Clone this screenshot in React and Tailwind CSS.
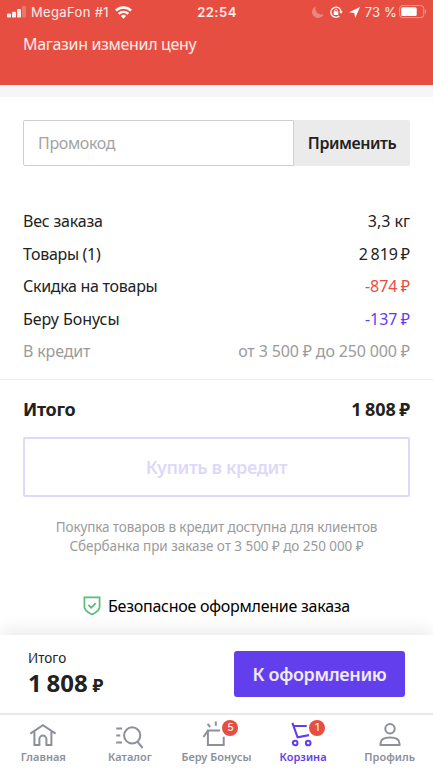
import React from 'react';

const summaryRows = [
  { label: 'Вес заказа', value: '3,3 кг', labelClass: 'tracking-[-0.2px]', valueClass: '' },
  { label: 'Товары (1)', value: '2 819 ₽', labelClass: 'tracking-[-0.3px]', valueClass: '[word-spacing:-1.5px]' },
  { label: 'Скидка на товары', value: '-874 ₽', labelClass: 'tracking-[-0.29px]', valueClass: '[word-spacing:-1px] text-[#e54e40]' },
  { label: 'Беру Бонусы', value: '-137 ₽', labelClass: 'tracking-[-0.05px]', valueClass: '[word-spacing:-1px] text-[#633eed]' },
  { label: 'В кредит', value: 'от 3 500 ₽ до 250 000 ₽', labelClass: 'tracking-[-0.15px] text-[#9b9b9b]', valueClass: 'tracking-[-0.15px] text-[#9b9b9b]' },
];

const HomeIcon = () => (
  <svg className="overflow-visible" width="28" height="25" viewBox="0 0 28 25" fill="none" stroke="currentColor" strokeWidth="2">
    <path d="M1.3 9.6 13.9 1.2l12.7 8.4" />
    <path d="M5.4 7.5v13.6h5v-6a3.5 3.5 0 0 1 7 0v6h5V7.5" />
  </svg>
);

const CatalogIcon = () => (
  <svg className="overflow-visible" width="28" height="25" viewBox="0 0 28 25" fill="none" stroke="currentColor" strokeWidth="2">
    <circle cx="16.2" cy="11.4" r="8.1" />
    <path d="m21.6 17.8 5 6.2M.2 4.4H6M.2 11.4h4M.2 18.4H6" />
  </svg>
);

const BonusIcon = () => (
  <svg className="overflow-visible" width="28" height="25" viewBox="0 0 28 25" fill="none" stroke="currentColor" strokeWidth="2">
    <path d="M1.5 13 5.9 6.4H18M5.9 6.4V21h15.8v-8.2" />
    <path d="m5.6-.2 2.6 3.2M13.8-2.6v4.4" />
  </svg>
);

const CartIcon = () => (
  <svg className="overflow-visible" width="28" height="25" viewBox="0 0 28 25" fill="none" stroke="currentColor" strokeWidth="2.1">
    <path d="M3.4-1.2 8.6 13.3 20 11.1M4.9 2h12.8" />
    <circle cx="6.2" cy="19" r="2.3" />
    <circle cx="19.2" cy="19" r="2.3" />
  </svg>
);

const ProfileIcon = () => (
  <svg className="overflow-visible" width="28" height="25" viewBox="0 0 28 25" fill="none" stroke="currentColor" strokeWidth="2">
    <circle cx="14" cy="4.7" r="4.7" />
    <path d="M4.5 21v-1.4c0-3.9 3.9-6 9.5-6s9.5 2.1 9.5 6V21z" />
  </svg>
);

const tabs = [
  { label: 'Главная', icon: HomeIcon },
  { label: 'Каталог', icon: CatalogIcon },
  { label: 'Беру Бонусы', icon: BonusIcon, badge: 5 },
  { label: 'Корзина', icon: CartIcon, badge: 1, active: true },
  { label: 'Профиль', icon: ProfileIcon },
];

const StatusBar = () => (
  <div className="grid grid-cols-[1fr_auto_1fr] items-center h-6 pl-[7px] pr-[6px] font-['Inter',sans-serif] text-[13px] leading-6 text-white/90">
    <div className="flex items-center">
      <svg width="19" height="12" viewBox="0 0 19 12" fill="currentColor">
        <rect x="0" y="7.5" width="4" height="4" rx="0.8" />
        <rect x="5" y="5.7" width="4" height="5.8" rx="0.8" />
        <rect x="10" y="3" width="4" height="8.5" rx="0.8" />
        <rect x="15" y="0" width="4" height="11.5" rx="0.8" opacity="0.25" />
      </svg>
      <span className="ml-[5px] tracking-[0.35px]">MegaFon #1</span>
      <svg className="ml-[6px]" width="17" height="13" viewBox="0 0 17 13" fill="none" stroke="white" strokeWidth="2.4">
        <path d="M.9 4.7a10.8 10.8 0 0 1 15.2 0M3.7 7.9a6.8 6.8 0 0 1 9.6 0" />
        <path d="m8.5 12.8 2.6-2.7a3.7 3.7 0 0 0-5.2 0z" fill="white" stroke="none" />
      </svg>
    </div>
    <span className="font-semibold tracking-[0.5px]">22:54</span>
    <div className="flex items-center justify-end">
      <svg width="12" height="12" viewBox="0 0 12 12" fill="currentColor" opacity="0.35">
        <path d="M3.8.4A6 6 0 1 0 11.7 8 6 6 0 0 1 3.8.4z" />
      </svg>
      <svg className="ml-[6px]" width="13" height="12" viewBox="0 0 13 12" fill="none" stroke="white" strokeWidth="1.3">
        <path d="M9.4 10A5.1 5.1 0 1 1 11.1 6" />
        <path d="M9.2 5.4h3.6L11 7.8z" fill="white" stroke="none" />
        <rect x="3.7" y="5.3" width="4.6" height="3.6" rx="0.5" fill="white" stroke="none" />
        <path d="M4.7 5.6V4.4a1.3 1.3 0 0 1 2.6 0v1.2" strokeWidth="0.9" />
      </svg>
      <svg className="ml-[6px]" width="11" height="11" viewBox="0 0 11 11" fill="white">
        <path d="M11 0 6.2 11 5.3 6 0 5.2z" />
      </svg>
      <span className="ml-[5px] tracking-[0.15px]">73 %</span>
      <svg className="ml-[2px]" width="28" height="14" viewBox="0 0 28 14">
        <rect x="0.6" y="0.6" width="24.2" height="12" rx="3" fill="none" stroke="white" strokeOpacity="0.45" />
        <rect x="2.2" y="2.2" width="15.5" height="8.8" rx="1.6" fill="white" />
        <path d="M26 4.5c1.5.5 1.5 3.7 0 4.2z" fill="white" fillOpacity="0.45" />
      </svg>
    </div>
  </div>
);

const TabItem = ({ tab }) => {
  const Icon = tab.icon;
  return (
    <div className={`relative flex-1 flex flex-col items-center pt-[9px] ${tab.active ? 'text-[#633eed]' : 'text-[#8c9099]'}`}>
      <Icon />
      <span className="mt-px text-[11px] leading-[14px] font-semibold tracking-[0.02px] whitespace-nowrap">{tab.label}</span>
      {tab.badge && (
        <span className="absolute left-1/2 top-[5px] ml-[6px] size-4 rounded-full bg-[#e54e40] text-white/90 font-['Inter',sans-serif] text-[10.5px] leading-4 font-medium text-center">
          {tab.badge}
        </span>
      )}
    </div>
  );
};

export default function App() {
  return (
    <div className="w-[433px] h-[770px] flex flex-col overflow-hidden bg-white font-['Noto_Sans',sans-serif] text-[#222]">
      <header className="h-[85px] shrink-0 bg-[#e54e40]">
        <StatusBar />
        <p className="pl-[23px] pt-[8px] text-[16px] leading-6 tracking-[-0.32px] text-white/90">Магазин изменил цену</p>
      </header>
      <div className="h-3 shrink-0 bg-[#f6f6f6]" />

      <main className="flex-1 flex flex-col pt-[23px]">
        <div className="mx-[23px] flex h-[46px]">
          <div className="flex-1 flex items-center pl-[14px] border border-[#cfcfcf] rounded-l-[2px] text-[16px] tracking-[-0.35px] text-[#a3a3a3]">
            Промокод
          </div>
          <button type="button" className="w-[116px] rounded-r-[2px] bg-[#ebebeb] text-[16px] font-semibold tracking-[-0.45px]">
            Применить
          </button>
        </div>

        <div className="mx-[23px] mt-[39px] flex flex-col">
          {summaryRows.map((row) => (
            <div key={row.label} className="flex justify-between h-[32.5px] items-center text-[16px] leading-6">
              <span className={row.labelClass}>{row.label}</span>
              <span className={row.valueClass}>{row.value}</span>
            </div>
          ))}
        </div>

        <div className="mt-[11.5px] h-px bg-[#ececec]" />

        <div className="mx-[23px] mt-[15px] flex justify-between text-[18px] leading-7 font-bold">
          <span className="tracking-[-0.3px]">Итого</span>
          <span className="tracking-[-0.1px] [word-spacing:-1px]">1 808 ₽</span>
        </div>

        <button type="button" className="mx-[23px] mt-[14px] h-[60px] shrink-0 rounded-[2px] border-2 border-[#ded8fb] text-[18px] font-semibold tracking-[-0.4px] text-[#ded8fb]">
          Купить в кредит
        </button>

        <p className="mt-[21px] text-center text-[13.5px] leading-[18.5px] text-[#9b9b9b]">
          <span className="tracking-[-0.12px]">Покупка товаров в кредит доступна для клиентов</span>
          <br />
          <span className="tracking-[-0.05px]">Сбербанка при заказе от 3 500 ₽ до 250 000 ₽</span>
        </p>

        <div className="mt-[39px] flex items-center justify-center text-[16px] leading-6 text-black">
          <svg className="mr-[7px]" width="18" height="20" viewBox="0 0 18 20" fill="none" stroke="#55bf78" strokeWidth="1.7">
            <path d="M1.4 1.4h15.2v9.4c0 3.5-3.3 5.8-7.6 7.8-4.3-2-7.6-4.3-7.6-7.8z" />
            <path d="m5.4 8.8 2.8 2.9 4.6-4.6" />
          </svg>
          <span className="tracking-[-0.25px]">Безопасное оформление заказа</span>
        </div>
      </main>

      <section className="h-[78px] shrink-0 flex items-start justify-between pl-[28px] pr-[28px] bg-white shadow-[0_-4px_18px_rgba(0,0,0,0.09)]">
        <div className="pt-[14px]">
          <div className="text-[13.5px] leading-[18px]">Итого</div>
          <div className="text-[24px] leading-[32px] font-bold [word-spacing:-1.5px]">
            1 808 <span className="text-[18px]">₽</span>
          </div>
        </div>
        <button type="button" className="mt-4 w-[171px] h-[46px] rounded-[3px] bg-[#633eed] text-white/90 text-[18px] font-semibold tracking-[-0.35px]">
          К оформлению
        </button>
      </section>

      <nav className="h-[57px] shrink-0 flex border-t-2 border-[#e9e9e9] bg-white">
        {tabs.map((tab) => (
          <TabItem key={tab.label} tab={tab} />
        ))}
      </nav>
    </div>
  );
}
